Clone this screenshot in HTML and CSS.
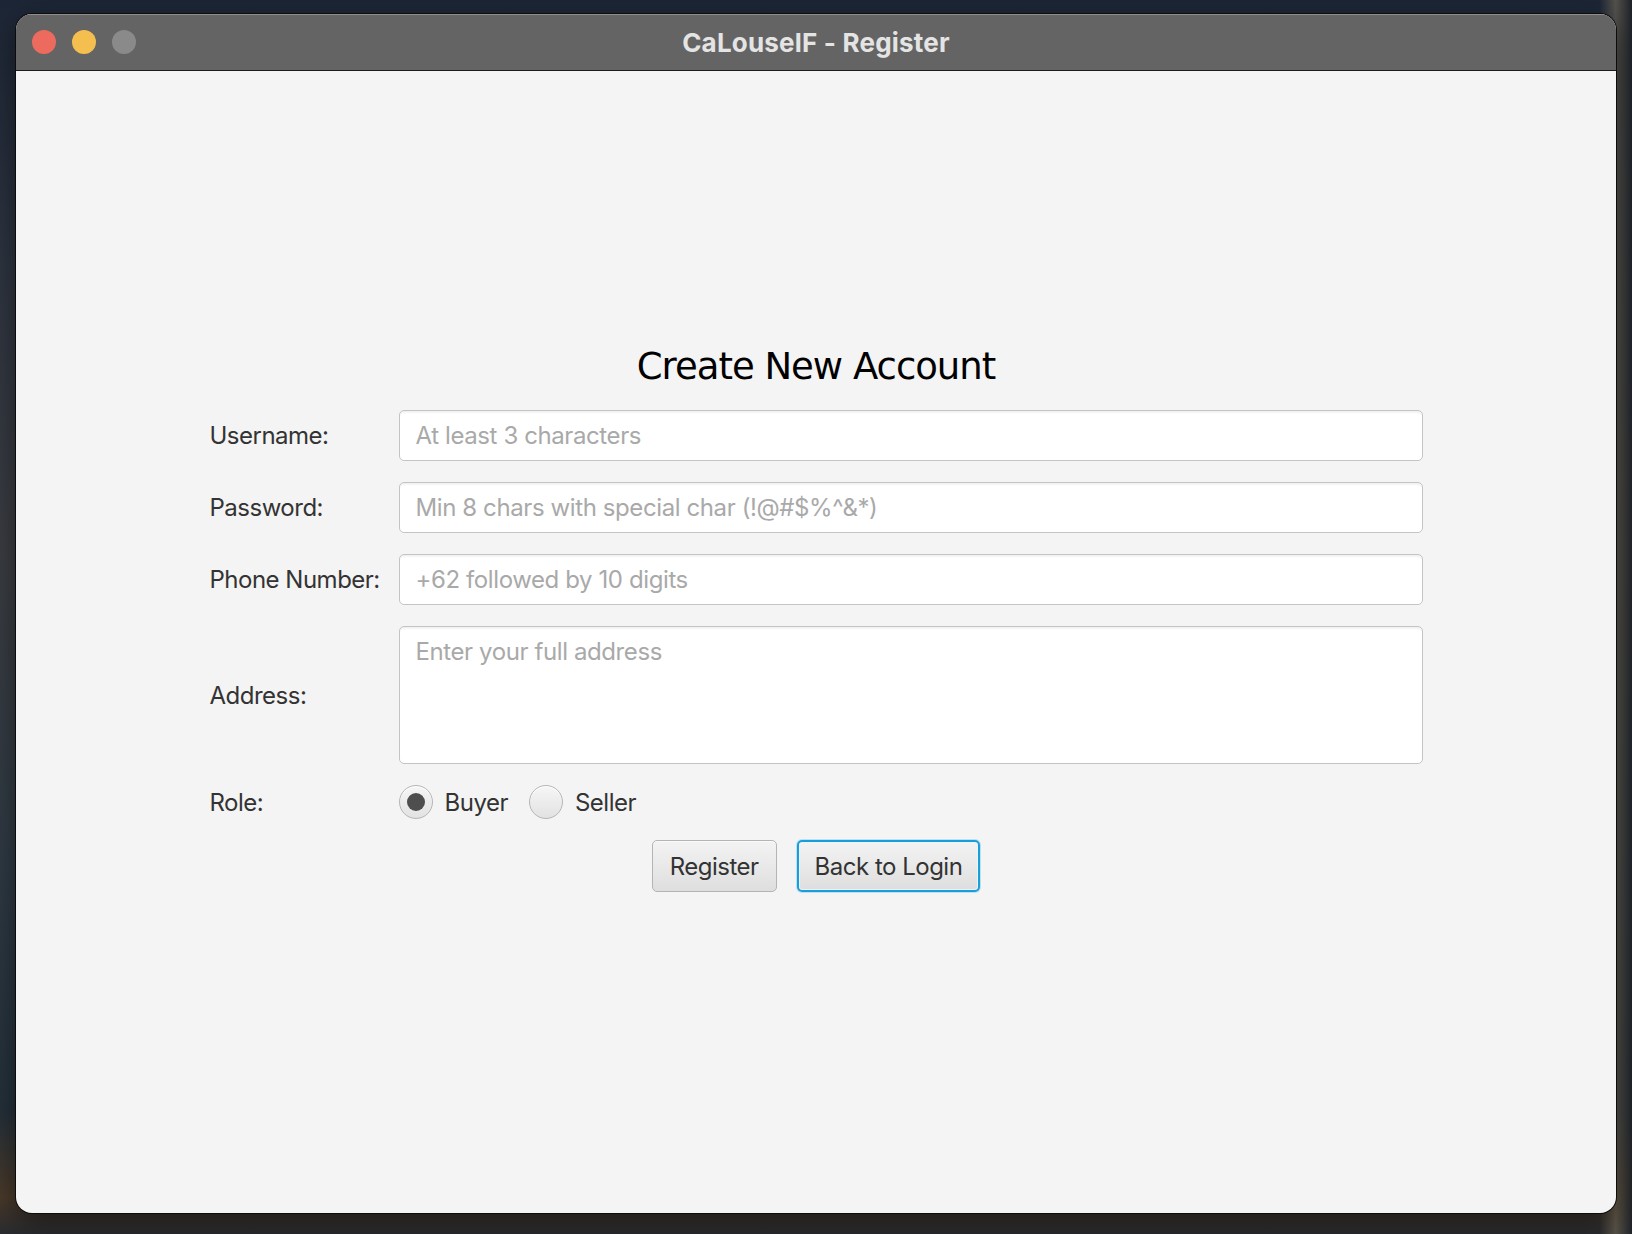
FILE: index.html
```html
<!DOCTYPE html>
<html lang="en">
<head>
<meta charset="utf-8">
<title>CaLouselF - Register</title>
<link rel="stylesheet" href="styles.css">
</head>
<body>
<div class="window">
  <div class="titlebar">
    <div class="lights">
      <span class="light red"></span>
      <span class="light yellow"></span>
      <span class="light grey"></span>
    </div>
    <div class="wintitle">CaLouselF - Register</div>
    <div></div>
  </div>
  <div class="content">
    <div class="form">
      <h1 class="heading">Create New Account</h1>

      <label class="label">Username:</label>
      <input class="field" type="text" placeholder="At least 3 characters">

      <label class="label">Password:</label>
      <input class="field" type="text" placeholder="Min 8 chars with special char (!@#$%^&amp;*)">

      <label class="label">Phone Number:</label>
      <input class="field" type="text" placeholder="+62 followed by 10 digits">

      <label class="label">Address:</label>
      <textarea class="field area" placeholder="Enter your full address"></textarea>

      <label class="label">Role:</label>
      <div class="roles">
        <div class="radio-item"><span class="radio checked"></span><span class="radio-text">Buyer</span></div>
        <div class="radio-item"><span class="radio"></span><span class="radio-text">Seller</span></div>
      </div>

      <div class="buttons">
        <button class="btn">Register</button>
        <button class="btn focused">Back to Login</button>
      </div>
    </div>
  </div>
</div>
</body>
</html>
```

FILE: styles.css
```css
* { box-sizing: border-box; }

html, body {
  margin: 0;
  padding: 0;
}

body {
  width: 1632px;
  height: 1234px;
  overflow: hidden;
  padding: 14px 0 0 16px;
  font-family: Inter, "Noto Sans", sans-serif;
  background:
    linear-gradient(90deg, rgba(40,50,66,0.0) 0%, rgba(40,50,66,0) 98%, rgba(120,110,90,0.6) 99%, rgba(30,34,40,0.9) 100%),
    linear-gradient(180deg, #1d2636 0%, #2d3440 20%, #3b3d42 45%, #2f3a44 70%, #24303a 90%, #4a3a2a 97%, #2a2c30 100%);
}

.window {
  width: 1600px;
  height: 1199px;
  border-radius: 16px;
  overflow: hidden;
  background: #f4f4f4;
  box-shadow: 0 0 0 1px #0c0c0c, 0 10px 30px rgba(0,0,0,0.5);
  display: flex;
  flex-direction: column;
}

.titlebar {
  height: 57px;
  flex: 0 0 57px;
  background: #646464;
  border-bottom: 1px solid #1c1c1c;
  box-shadow: inset 0 1px 0 #8e8e8e;
  display: grid;
  grid-template-columns: 1fr auto 1fr;
  align-items: center;
}

.lights {
  display: flex;
  gap: 16px;
  padding-left: 16px;
}

.light {
  width: 24px;
  height: 24px;
  border-radius: 50%;
  display: block;
}
.light.red { background: #ed6a5e; }
.light.yellow { background: #f5bf4f; }
.light.grey { background: #8a8a8a; }

.wintitle {
  color: #e4e4e4;
  font-weight: 700;
  font-size: 26px;
  letter-spacing: 0.2px;
}

.content {
  flex: 1;
  padding-top: 274px;
}

.form {
  width: 1213px;
  margin: 0 auto;
  display: grid;
  grid-template-columns: 189px 1024px;
  row-gap: 21px;
  align-items: center;
}

.heading {
  grid-column: 1 / span 2;
  margin: 0;
  text-align: center;
  font-family: "DejaVu Sans", sans-serif;
  font-weight: 400;
  font-size: 37px;
  line-height: 44px;
  letter-spacing: -1px;
  color: #000;
}

.label {
  font-size: 24px;
  color: #333;
  letter-spacing: -0.5px;
}

.field {
  display: block;
  width: 1024px;
  height: 51px;
  margin: 0;
  padding: 0 16px;
  border: 1.5px solid #c4c4c4;
  border-radius: 5px;
  background: #fff;
  box-shadow: inset 0 3px 3px -2px rgba(0,0,0,0.09);
  font-family: Inter, "Noto Sans", sans-serif;
  font-size: 24px;
  letter-spacing: -0.4px;
  color: #333;
  outline: none;
}

.field::placeholder {
  color: #a9a9a9;
  opacity: 1;
}

.area {
  height: 138px;
  padding: 8px 16px;
  resize: none;
  line-height: 34px;
  overflow: hidden;
}

.roles {
  display: flex;
  align-items: center;
  gap: 21px;
  height: 34px;
}

.radio-item {
  display: flex;
  align-items: center;
  gap: 12px;
}

.radio {
  width: 34px;
  height: 34px;
  border-radius: 50%;
  border: 1.5px solid #b6b6b6;
  background: linear-gradient(180deg, #f6f6f6, #e2e2e2);
  box-shadow: inset 0 1px 0 #fff;
  display: flex;
  align-items: center;
  justify-content: center;
}

.radio.checked::after {
  content: "";
  width: 18px;
  height: 18px;
  border-radius: 50%;
  background: #4e4e4e;
}

.radio-text {
  font-size: 24px;
  color: #333;
  letter-spacing: -0.5px;
}

.buttons {
  grid-column: 1 / span 2;
  display: flex;
  justify-content: center;
  gap: 20px;
}

.btn {
  height: 52px;
  padding: 0 17px;
  border: 1.5px solid #b4b4b4;
  border-radius: 5px;
  background: linear-gradient(180deg, #f3f3f3 0%, #e9e9e9 50%, #dedede 100%);
  box-shadow: inset 0 1px 0 #fafafa;
  font-family: Inter, "Noto Sans", sans-serif;
  font-size: 24px;
  letter-spacing: -0.5px;
  color: #333;
}

.btn.focused {
  border: 2px solid #1a9ed9;
  box-shadow: 0 0 0 1px rgba(26,158,217,0.25), inset 0 0 0 1px #eaf4fa;
  padding: 0 16px;
}
```
